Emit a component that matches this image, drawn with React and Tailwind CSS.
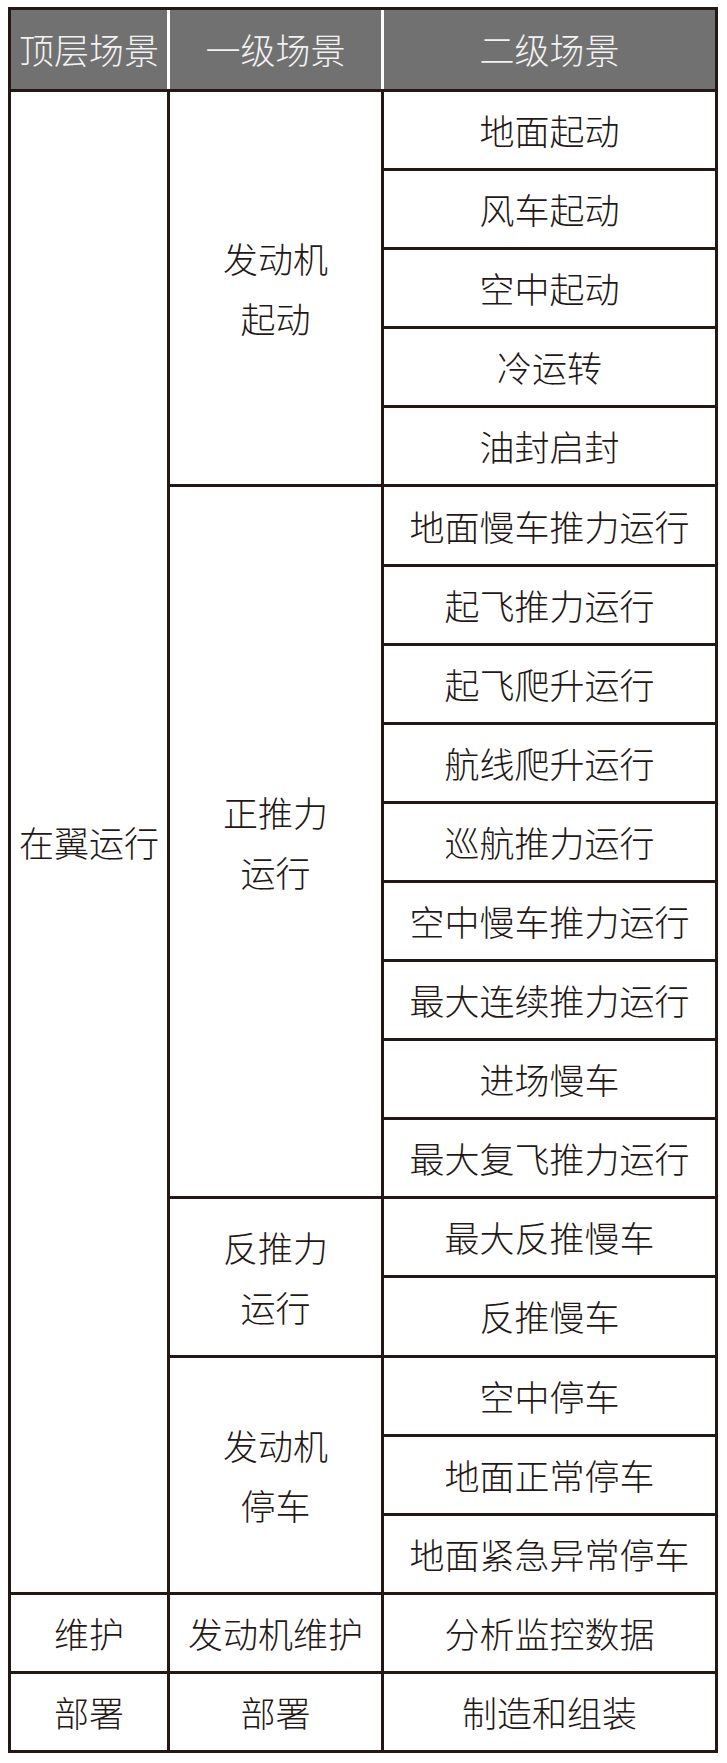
import React from 'react';

const groups = [
  {
    top: '在翼运行',
    subs: [
      { name: ['发动机', '起动'], items: ['地面起动', '风车起动', '空中起动', '冷运转', '油封启封'] },
      {
        name: ['正推力', '运行'],
        items: [
          '地面慢车推力运行',
          '起飞推力运行',
          '起飞爬升运行',
          '航线爬升运行',
          '巡航推力运行',
          '空中慢车推力运行',
          '最大连续推力运行',
          '进场慢车',
          '最大复飞推力运行',
        ],
      },
      { name: ['反推力', '运行'], items: ['最大反推慢车', '反推慢车'] },
      { name: ['发动机', '停车'], items: ['空中停车', '地面正常停车', '地面紧急异常停车'] },
    ],
  },
  { top: '维护', subs: [{ name: ['发动机维护'], items: ['分析监控数据'] }] },
  { top: '部署', subs: [{ name: ['部署'], items: ['制造和组装'] }] },
];

const spanClass = {
  1: 'row-span-1',
  2: 'row-span-2',
  3: 'row-span-3',
  5: 'row-span-5',
  9: 'row-span-9',
  19: 'row-span-19',
};

const Cell = ({ span, children }) => (
  <div className={`${spanClass[span]} bg-white flex flex-col items-center justify-center text-center leading-[60px]`}>
    {children}
  </div>
);

const App = () => {
  const cells = [];
  groups.forEach((g, gi) => {
    const total = g.subs.reduce((n, s) => n + s.items.length, 0);
    g.subs.forEach((s, si) => {
      s.items.forEach((item, ii) => {
        if (si === 0 && ii === 0) {
          cells.push(
            <Cell key={`t${gi}`} span={total}>
              {g.top}
            </Cell>
          );
        }
        if (ii === 0) {
          cells.push(
            <Cell key={`s${gi}-${si}`} span={s.items.length}>
              {s.name.map((line) => (
                <span key={line}>{line}</span>
              ))}
            </Cell>
          );
        }
        cells.push(
          <Cell key={`i${gi}-${si}-${ii}`} span={1}>
            {item}
          </Cell>
        );
      });
    });
  });

  return (
    <div className="min-h-screen bg-white pt-[7px] pl-[8px] text-[#231815] text-[35px] font-['Noto_Sans_CJK_SC',sans-serif] font-light">
      <div className="w-[710px] border-[3px] border-[#231815] bg-[#231815] flex flex-col gap-[3px]">
        {/* Header */}
        <div className="grid grid-cols-[156px_211px_331px] gap-x-[3px] bg-white h-[79px]">
          {['顶层场景', '一级场景', '二级场景'].map((h) => (
            <div key={h} className="bg-[#727171] text-[#f2f2f2] flex items-center justify-center">
              {h}
            </div>
          ))}
        </div>
        {/* Body */}
        <div className="grid grid-cols-[156px_211px_331px] grid-rows-[repeat(21,76.1px)] gap-[3px]">
          {cells}
        </div>
      </div>
    </div>
  );
};

export default App;
